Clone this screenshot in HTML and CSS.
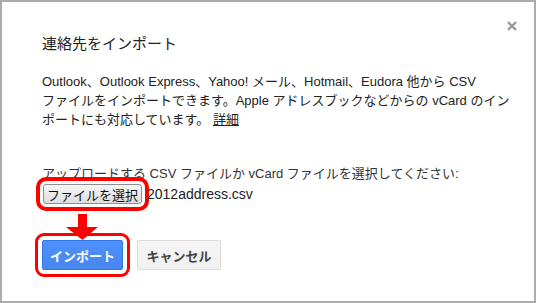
FILE: index.html
```html
<!DOCTYPE html>
<html lang="ja">
<head>
  <meta charset="UTF-8">
  <title>連絡先をインポート</title>
  <link rel="stylesheet" href="styles.css">
</head>
<body>

  <div class="dialog">
    <svg class="close" width="10" height="10" viewBox="0 0 10 10">
      <path d="M1 1 L9 9 M9 1 L1 9" stroke="#9a9a9a" stroke-width="2.4" fill="none"/>
    </svg>

    <h2 class="title">連絡先をインポート</h2>

    <p class="desc">
      Outlook、Outlook Express、Yahoo! メール、Hotmail、Eudora 他から CSV<br>
      ファイルをインポートできます。Apple アドレスブックなどからの vCard のイン<br>
      ポートにも対応しています。 <a href="#">詳細</a>
    </p>

    <p class="upload-label">アップロードする CSV ファイルか vCard ファイルを選択してください:</p>
    <div class="file-row">
      <button class="file-btn mark-thick">ファイルを選択</button>
      <span class="file-name">2012address.csv</span>
    </div>

    <svg class="arrow" width="32" height="26" viewBox="0 0 32 26">
      <path d="M12 0 H21 V13 H32 L16.5 26 L0 13 H12 Z" fill="#ff0000"/>
    </svg>

    <div class="actions">
      <button class="btn btn-primary mark">インポート</button>
      <button class="btn btn-cancel">キャンセル</button>
    </div>
  </div>

</body>
</html>
```

FILE: styles.css
```css
body {
  margin: 0;
  padding: 0;
  background: #fff;
  font-family: "Liberation Sans", Arial, "Noto Sans CJK JP", sans-serif;
  color: #222;
}

.dialog {
  position: relative;
  width: 536px;
  height: 303px;
  box-sizing: border-box;
  border: 2px solid #acacac;
  padding: 0 40px;
  overflow: hidden;
}

.close {
  position: absolute;
  top: 19px;
  left: 505px;
}

.title {
  margin: 0;
  padding-top: 32px;
  font-size: 15px;
  font-weight: normal;
  line-height: 20px;
}

.desc {
  margin: 18px 0 0;
  font-size: 13px;
  line-height: 19px;
  white-space: nowrap;
}

.desc a {
  color: #222;
  text-decoration: underline;
}

.upload-label {
  margin: 36px 0 0;
  font-size: 13px;
  line-height: 17px;
  color: #333;
  white-space: nowrap;
}

.file-row {
  display: flex;
  align-items: center;
  gap: 5px;
  margin-top: 2px;
}

.file-btn {
  height: 20px;
  padding: 0 3px;
  margin-left: 1px;
  font-family: inherit;
  font-size: 13px;
  color: #111;
  white-space: nowrap;
  background: linear-gradient(#f6f6f6, #dedede);
  border: 1px solid #8e8e8e;
  border-radius: 3px;
}

.file-name {
  font-size: 14px;
}

.mark-thick {
  outline: 4px solid #ff0000;
  outline-offset: 3px;
}

.mark {
  outline: 3px solid #ff0000;
  outline-offset: 4px;
}

.arrow {
  position: absolute;
  left: 64px;
  top: 212px;
}

.actions {
  display: flex;
  gap: 14px;
  margin-top: 36px;
}

.btn {
  height: 30px;
  padding: 0;
  font-family: inherit;
  font-size: 13px;
  font-weight: bold;
  white-space: nowrap;
  border-radius: 2px;
}

.btn-primary {
  width: 81px;
  color: #fff;
  background: linear-gradient(#4d90fe, #4787ed);
  border: 1px solid #3079ed;
}

.btn-cancel {
  width: 84px;
  color: #444;
  background: linear-gradient(#f5f5f5, #f1f1f1);
  border: 1px solid #dcdcdc;
}
```
